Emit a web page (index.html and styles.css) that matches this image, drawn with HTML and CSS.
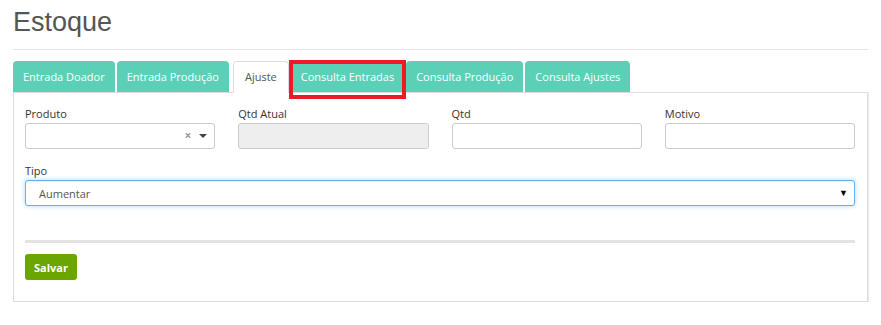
FILE: index.html
```html
<!DOCTYPE html>
<html lang="pt-BR">
<head>
    <meta charset="UTF-8">
    <meta name="viewport" content="width=device-width, initial-scale=1.0">
    <title>Estoque</title>
    <link rel="stylesheet" href="styles.css">
</head>
<body>
    <div class="page">
        <div class="page-header">
            <h1>Estoque</h1>
        </div>

        <ul class="tabs">
            <li class="tab">Entrada Doador</li>
            <li class="tab">Entrada Produção</li>
            <li class="tab active">Ajuste</li>
            <li class="tab marked">Consulta Entradas<span class="mark"></span></li>
            <li class="tab">Consulta Produção</li>
            <li class="tab">Consulta Ajustes</li>
        </ul>

        <div class="panel">
            <div class="row">
                <div class="field">
                    <label>Produto</label>
                    <div class="select2">
                        <span class="clear">&times;</span>
                        <span class="caret"></span>
                    </div>
                </div>
                <div class="field">
                    <label for="qtdAtual">Qtd Atual</label>
                    <input type="text" id="qtdAtual" disabled>
                </div>
                <div class="field">
                    <label for="qtd">Qtd</label>
                    <input type="text" id="qtd">
                </div>
                <div class="field">
                    <label for="motivo">Motivo</label>
                    <input type="text" id="motivo">
                </div>
            </div>

            <div class="field">
                <label for="tipo">Tipo</label>
                <div class="select-wrap">
                    <select id="tipo">
                        <option>Aumentar</option>
                        <option>Diminuir</option>
                    </select>
                </div>
            </div>

            <div class="divider"></div>

            <button class="btn-save">Salvar</button>
        </div>
    </div>
</body>
</html>
```

FILE: styles.css
```css
body {
    font-family: "Open Sans", Arial, sans-serif;
    font-size: 11px;
    color: #333;
    background-color: #fff;
    margin: 0;
    padding: 0;
}
.page {
    padding: 0 13px;
}
.page-header {
    border-bottom: 1px solid #e5e5e5;
    padding: 7px 0 12px;
}
h1 {
    font-family: "Liberation Sans", Arial, sans-serif;
    font-weight: normal;
    font-size: 27px;
    line-height: 30px;
    color: #555;
    margin: 0;
}
.tabs {
    list-style: none;
    margin: 11px 0 0;
    padding: 0;
    display: flex;
    position: relative;
    z-index: 1;
}
.tab {
    position: relative;
    height: 31px;
    line-height: 31px;
    padding: 0 10px;
    margin-right: 2px;
    box-sizing: border-box;
    background-color: #5ccfb7;
    color: #fff;
    border-radius: 4px 4px 0 0;
    cursor: pointer;
}
.tab.active {
    background-color: #fff;
    color: #555;
    border: 1px solid #ddd;
    border-bottom-color: #fff;
    height: 32px;
    line-height: 30px;
    padding: 0 11px;
    margin: 0 2px 0 2px;
}
.tab .mark {
    position: absolute;
    left: -2px;
    right: -2px;
    top: -1px;
    bottom: -7px;
    border: 4px solid #ed1c24;
}
.panel {
    border: 1px solid #ddd;
    box-shadow: 1px 1px 1px rgba(0, 0, 0, 0.08);
    padding: 13px 12px 21px 11px;
    margin-top: -1px;
}
.row {
    display: grid;
    grid-template-columns: repeat(4, 1fr);
    gap: 23px;
}
.field label {
    display: block;
    line-height: 15px;
    margin-bottom: 2px;
}
.row .field {
    margin-bottom: 14px;
}
input[type="text"], .select2 {
    display: block;
    width: 100%;
    height: 26px;
    box-sizing: border-box;
    border: 1px solid #ccc;
    border-radius: 3px;
    background-color: #fff;
    font-family: inherit;
    font-size: 11px;
    padding: 4px 10px;
}
input[type="text"]:disabled {
    background-color: #eee;
}
.select2 {
    display: flex;
    align-items: center;
    justify-content: flex-end;
    gap: 8px;
    padding-right: 7px;
}
.select2 .clear {
    color: #999;
    font-size: 12px;
    font-weight: bold;
    line-height: 1;
}
.select2 .caret {
    width: 0;
    height: 0;
    border-left: 4px solid transparent;
    border-right: 4px solid transparent;
    border-top: 4px solid #444;
}
.select-wrap {
    position: relative;
}
.select-wrap::after {
    content: "\25BC";
    position: absolute;
    right: 7px;
    top: 6px;
    font-size: 9px;
    color: #000;
    pointer-events: none;
}
select {
    appearance: none;
    -webkit-appearance: none;
    display: block;
    width: 100%;
    height: 26px;
    box-sizing: border-box;
    border: 1px solid #66afe9;
    border-radius: 3px;
    box-shadow: inset 0 1px 1px rgba(0, 0, 0, 0.075), 0 0 5px rgba(102, 175, 233, 0.5);
    background-color: #fff;
    font-family: inherit;
    font-size: 11px;
    color: #555;
    padding: 0 13px;
}
.divider {
    height: 3px;
    background-color: #e3e3e3;
    margin: 34px 0 11px;
}
.btn-save {
    background-color: #6aa500;
    color: #fff;
    font-family: inherit;
    font-size: 11px;
    font-weight: bold;
    height: 26px;
    padding: 0 9px;
    border: none;
    border-radius: 3px;
    cursor: pointer;
}
.btn-save:hover {
    background-color: #5a8c00;
}
```
